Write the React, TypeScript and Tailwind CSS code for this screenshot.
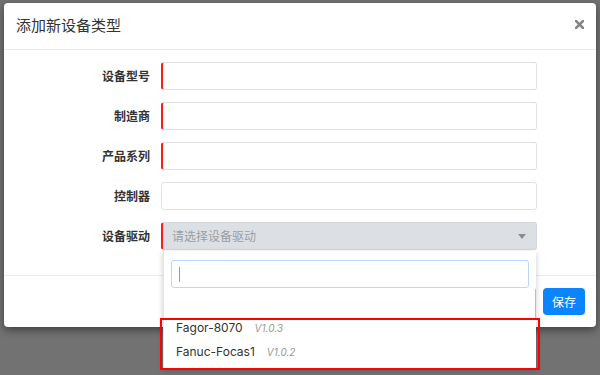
import React from "react";

const fields = [
  { label: "设备型号", required: true },
  { label: "制造商", required: true },
  { label: "产品系列", required: true },
  { label: "控制器", required: false },
];

const drivers = [
  { name: "Fagor-8070", version: "V1.0.3" },
  { name: "Fanuc-Focas1", version: "V1.0.2" },
];

const App = () => {
  return (
    <div className="relative w-[600px] h-[375px] overflow-hidden bg-[#727272] pt-[3px] pl-[4px] font-['Noto_Sans_CJK_SC',sans-serif]">
      <div className="w-[592px] h-[324px] bg-white rounded-[4px] shadow-[0_3px_9px_rgba(0,0,0,0.45)] flex flex-col">
        {/* header */}
        <div className="h-[47px] flex items-center justify-between pl-[12px] pr-[12px] pb-[3px] border-b border-[#e9ecef]">
          <p className="text-[15px] text-[#333] leading-none">添加新设备类型</p>
          <svg width="9" height="9" viewBox="0 0 9 9">
            <path d="M1 1 L8 8 M8 1 L1 8" stroke="#858585" strokeWidth="2.5" strokeLinecap="square" />
          </svg>
        </div>

        {/* body */}
        <div className="flex flex-col gap-[12px] pt-[12px] pb-[25px]">
          {fields.map((f) => (
            <div key={f.label} className="flex items-center h-[28px]">
              <label className="w-[146px] text-right text-[12px] font-bold text-[#333]">{f.label}</label>
              <div
                className={
                  f.required
                    ? "ml-[11px] w-[376px] h-[28px] rounded-[3px] border border-[#dfe2e6] border-l-2 border-l-[#ff1a1a] bg-white"
                    : "ml-[11px] w-[376px] h-[28px] rounded-[3px] border border-[#dfe2e6] bg-white"
                }
              />
            </div>
          ))}

          <div className="flex items-center h-[28px]">
            <label className="w-[146px] text-right text-[12px] font-bold text-[#333]">设备驱动</label>
            <div className="relative ml-[11px] w-[376px] h-[28px]">
              <div className="w-full h-full rounded-[3px] border border-[#d3d8de] border-l-2 border-l-[#ff1a1a] bg-[#dce0e5] flex items-center justify-between pl-[9px] pr-[10px]">
                <span className="text-[12px] text-[#9a9ea4]">请选择设备驱动</span>
                <span className="w-0 h-0 border-t-[5px] border-t-[#8c8c8c] border-x-[4px] border-x-transparent" />
              </div>

              {/* dropdown */}
              <div className="absolute left-[2px] top-[29px] w-[373px] bg-white z-10 shadow-[0_2px_6px_rgba(0,0,0,0.2)] border-l border-[#e4e4e4] pt-[9px] px-[7px] pb-[4px]">
                <div className="h-[28px] rounded-[3px] border border-[#b9d7f7] flex items-center pl-[7px]">
                  <span className="w-[1px] h-[15px] bg-[#9a9a9a]" />
                </div>
                <div className="absolute right-0 top-[38px] w-[1px] h-[29px] bg-[#f2a6a6]" />
                <ul className="mt-[28px] -mx-[7px]">
                  {drivers.map((d) => (
                    <li key={d.name} className="h-[24px] flex items-center pl-[12px] font-['Inter',sans-serif]">
                      <span className="text-[12px] text-[#333]">{d.name}</span>
                      <span className="ml-[12px] text-[10px] italic text-[#999]">{d.version}</span>
                    </li>
                  ))}
                </ul>
                <div className="absolute left-[-4px] top-[67px] w-[380px] h-[52px] border-2 border-[#ff0000]" />
              </div>
            </div>
          </div>
        </div>

        {/* footer */}
        <div className="flex-1 border-t border-[#e9ecef] flex items-center justify-end pr-[11px]">
          <button className="w-[42px] h-[27px] rounded-[4px] bg-[#0a84ff] text-white text-[12px]">保存</button>
        </div>
      </div>
    </div>
  );
};

export default App;
